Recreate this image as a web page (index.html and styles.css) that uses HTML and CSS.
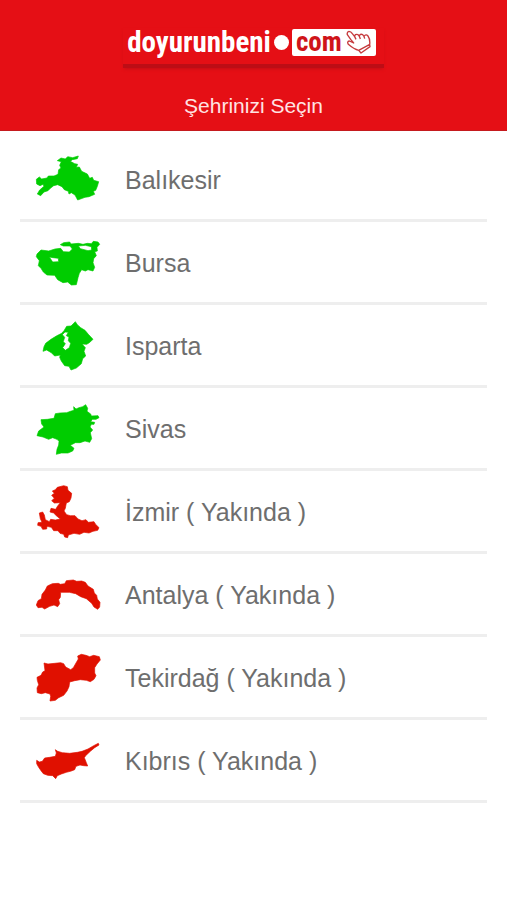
FILE: index.html
```html
<!DOCTYPE html>
<html lang="tr">
<head>
<meta charset="utf-8">
<meta name="viewport" content="width=device-width, initial-scale=1">
<title>doyurunbeni.com</title>
<link rel="stylesheet" href="styles.css">
</head>
<body>
<header class="header">
  <div class="logo">
    <span class="logo-name">doyurunbeni</span>
    <span class="logo-dot"></span>
    <span class="logo-box">
      <span class="logo-com">com</span>
      <svg class="logo-hand" viewBox="0 0 78 72" aria-hidden="true">
        <path d="M14 28 L4 14 Q2 6 9 4 Q15 4 19 11 L26 20 Q26 11 36 14 L40 19 Q42 10 50 14 L54 19 Q60 11 66 18 Q73 28 71 44 L72 50 L45 69 L38 61 Q24 58 7 43 Q2 35 10 33 L23 39 Z M26 20 L30 28 M40 19 L43 27 M54 19 L56 26 M38 61 L70 44"/>
      </svg>
    </span>
  </div>
  <h1 class="title">Şehrinizi Seçin</h1>
</header>
<main>
  <ul class="cities">
    <li><a class="city" href="#balikesir">
      <svg class="map open" viewBox="0 -18 270 240" aria-hidden="true"><path d="M97 47 L108 39 L121 42 L128 35 L143 38 L160 33 L157 41 L142 44 L136 49 L149 56 L158 58 L154 67 L163 66 L170 79 L187 87 L194 100 L202 97 L206 106 L221 110 L217 124 L212 136 L205 139 L209 148 L192 155 L180 157 L158 165 L150 150 L139 143 L132 147 L130 139 L118 134 L111 125 L98 119 L86 122 L76 130 L69 137 L57 141 L47 152 L37 147 L44 135 L57 124 L54 118 L45 122 L35 117 L34 103 L43 96 L50 102 L66 99 L70 93 L87 93 L99 88 L101 74 L108 69 L104 61 L109 50 Z"/></svg>
      <span class="name">Balıkesir</span></a></li>
    <li><a class="city" href="#bursa">
      <svg class="map open" viewBox="0 -24 270 240" aria-hidden="true"><path fill-rule="evenodd" d="M106 44 L116 38 L134 36 L138 42 L160 40 L174 43 L187 40 L199 41 L205 34 L219 36 L224 43 L216 52 L217 63 L209 65 L214 77 L206 86 L204 98 L209 112 L204 123 L189 119 L181 123 L170 119 L163 130 L159 143 L154 164 L139 165 L128 156 L114 158 L98 149 L89 136 L66 135 L55 126 L48 115 L40 107 L43 92 L34 80 L36 72 L48 60 L71 63 L90 57 L107 55 L115 65 L133 66 L142 57 L135 48 L115 48 Z M160 48 L166 56 L189 62 L200 60 L199 50 L181 46 Z M73 81 L83 96 L101 95 L100 85 L84 83 Z"/></svg>
      <span class="name">Bursa</span></a></li>
    <li><a class="city" href="#isparta">
      <svg class="map open" viewBox="0 -21 270 240" aria-hidden="true"><path fill-rule="evenodd" d="M151 29 L157 38 L167 47 L180 55 L190 67 L204 82 L193 92 L185 97 L171 96 L181 107 L177 118 L182 132 L173 140 L169 155 L154 168 L138 174 L132 163 L119 161 L109 147 L104 136 L106 129 L89 132 L79 122 L65 114 L54 118 L57 104 L62 94 L78 82 L94 72 L110 64 L117 56 L125 43 L138 42 Z M120 60 L112 68 L119 76 L115 89 L121 95 L113 107 L121 115 L133 107 L137 94 L130 86 L132 75 L124 71 L130 61 Z"/></svg>
      <span class="name">Isparta</span></a></li>
    <li><a class="city" href="#sivas">
      <svg class="map open" viewBox="0 -21 270 240" aria-hidden="true"><path d="M146 35 L153 42 L162 38 L173 35 L182 29 L188 40 L186 49 L197 57 L199 63 L219 62 L222 68 L213 73 L202 73 L197 80 L209 82 L207 88 L199 88 L195 96 L203 105 L196 113 L200 131 L194 142 L180 138 L165 143 L151 143 L136 151 L147 160 L143 168 L129 174 L109 174 L94 178 L96 163 L101 150 L102 139 L96 133 L83 128 L71 133 L54 126 L36 122 L41 108 L57 96 L50 87 L48 74 L67 73 L87 70 L91 56 L105 54 L125 53 L139 48 L147 46 Z"/></svg>
      <span class="name">Sivas</span></a></li>
    <li><a class="city" href="#izmir">
      <svg class="map soon" viewBox="0 -21 270 240" aria-hidden="true"><path d="M82 39 L91 35 L97 28 L116 23 L127 26 L129 37 L140 46 L138 60 L133 71 L124 75 L121 91 L117 99 L125 110 L136 113 L150 113 L159 123 L171 128 L183 125 L190 133 L207 131 L211 138 L222 149 L218 157 L204 160 L192 165 L177 163 L164 169 L147 166 L130 171 L128 179 L119 177 L116 169 L105 166 L99 158 L86 158 L79 148 L66 145 L65 153 L53 154 L48 145 L38 142 L39 134 L51 133 L46 122 L43 105 L53 102 L58 111 L61 125 L73 131 L77 124 L91 126 L106 123 L94 113 L86 105 L75 102 L78 91 L92 94 L98 84 L106 74 L88 75 L80 68 L88 61 L80 52 L88 46 Z"/></svg>
      <span class="name">İzmir ( Yakında )</span></a></li>
    <li><a class="city" href="#antalya">
      <svg class="map soon" viewBox="0 -33 270 240" aria-hidden="true"><path d="M34 120 L39 107 L49 101 L51 88 L61 75 L67 63 L82 56 L100 55 L106 58 L119 56 L124 47 L145 45 L155 49 L170 48 L181 52 L189 63 L205 73 L208 84 L215 91 L217 102 L225 112 L224 126 L218 133 L207 126 L200 115 L184 101 L167 95 L152 86 L133 82 L107 82 L106 97 L101 104 L104 116 L98 125 L87 120 L74 124 L59 132 L51 127 L39 128 Z"/></svg>
      <span class="name">Antalya ( Yakında )</span></a></li>
    <li><a class="city" href="#tekirdag">
      <svg class="map soon" viewBox="0 -24 270 240" aria-hidden="true"><path d="M57 54 L69 57 L89 55 L107 53 L116 56 L122 66 L137 74 L145 68 L153 54 L160 42 L158 33 L169 28 L183 31 L194 35 L206 31 L223 35 L226 45 L216 57 L209 68 L209 84 L213 92 L207 103 L196 110 L184 106 L166 104 L149 107 L134 111 L132 125 L126 138 L116 151 L101 158 L91 166 L75 168 L77 154 L75 147 L61 143 L49 146 L37 143 L36 129 L41 119 L37 106 L36 97 L48 91 L53 81 L60 77 Z"/></svg>
      <span class="name">Tekirdağ ( Yakında )</span></a></li>
    <li><a class="city" href="#kibris">
      <svg class="map soon" viewBox="0 -30 270 240" aria-hidden="true"><path d="M91 59 L98 64 L112 68 L134 70 L157 67 L171 64 L189 57 L206 47 L220 40 L222 45 L209 53 L196 64 L182 77 L178 83 L184 98 L188 108 L176 107 L165 105 L153 109 L149 119 L139 123 L124 127 L109 132 L97 137 L92 146 L83 137 L68 136 L55 131 L48 122 L41 112 L35 101 L35 91 L43 96 L52 94 L59 84 L74 82 L91 79 L94 69 Z"/></svg>
      <span class="name">Kıbrıs ( Yakında )</span></a></li>
  </ul>
</main>
</body>
</html>
```

FILE: styles.css
```css
* {
  box-sizing: border-box;
}

body {
  margin: 0;
  background: #fff;
  color: #6e6e6e;
  font-family: "Liberation Sans", Arial, sans-serif;
}

.header {
  display: flex;
  flex-direction: column;
  align-items: center;
  padding: 28px 20px 10px;
  background: #e50f15;
  border-bottom: 1px solid #c51a1e;
  color: #fff;
}

.logo {
  display: flex;
  align-items: center;
  gap: 3px;
  height: 40px;
  padding: 0 8px 8px 4px;
  border-bottom: 4px solid #bd0d15;
  box-shadow: 0 2px 3px -1px #c60e15;
}

.logo-name,
.logo-com {
  font-family: "Roboto Condensed", "Liberation Sans Narrow", sans-serif;
  font-size: 29px;
  font-weight: bold;
  line-height: 28px;
}

.logo-com {
  font-size: 27px;
}

.logo-dot {
  width: 15px;
  height: 15px;
  border-radius: 50%;
  background: #fff;
}

.logo-box {
  display: flex;
  align-items: center;
  gap: 4px;
  height: 27px;
  padding: 0 4px;
  border-radius: 2px;
  background: #fff;
  color: #cf1419;
}

.logo-hand {
  width: 26px;
  height: 24px;
  fill: none;
  stroke: #c63a3d;
  stroke-width: 4;
  stroke-linejoin: round;
}

.title {
  margin: 24px 0 0;
  color: #ffe3e3;
  font-size: 21px;
  font-weight: normal;
  line-height: 28px;
}

.cities {
  margin: 8px 20px 0;
  padding: 0;
  list-style: none;
}

.city {
  display: flex;
  align-items: center;
  gap: 10px;
  padding-left: 5px;
  border-bottom: 3px solid #eee;
  color: inherit;
  font-size: 25px;
  line-height: 32px;
  text-decoration: none;
}

.name {
  padding-top: 2px;
}

.map {
  flex: none;
  width: 90px;
  height: 80px;
  stroke-width: 2;
  stroke-linejoin: round;
}

.open {
  fill: #0c0;
  stroke: #0c0;
}

.soon {
  fill: #e01000;
  stroke: #e01000;
}
```
